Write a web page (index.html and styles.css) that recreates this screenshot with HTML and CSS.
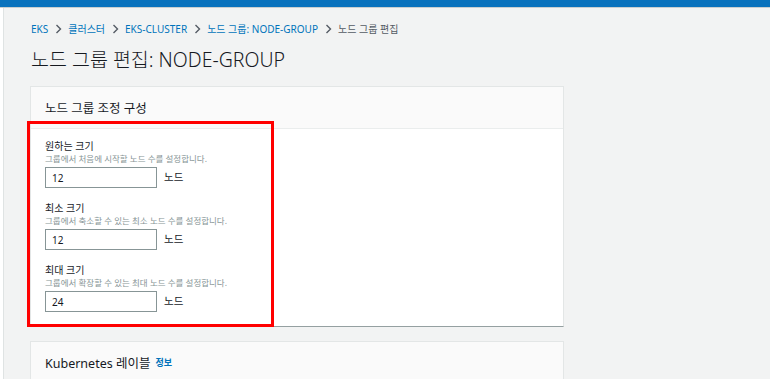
FILE: index.html
```html
<!DOCTYPE html>
<html lang="ko">
<head>
  <meta charset="UTF-8">
  <meta name="viewport" content="width=device-width, initial-scale=1.0">
  <title>노드 그룹 편집</title>
  <link rel="stylesheet" href="styles.css">
</head>
<body>
  <div class="top-bar"></div>
  <div class="page">
    <div class="breadcrumb">
      <a href="#">EKS</a>
      <svg class="sep" width="7" height="10" viewBox="0 0 7 10"><path d="M1.5 1 L5.5 5 L1.5 9" fill="none" stroke="#545b64" stroke-width="1.4"/></svg>
      <a href="#">클러스터</a>
      <svg class="sep" width="7" height="10" viewBox="0 0 7 10"><path d="M1.5 1 L5.5 5 L1.5 9" fill="none" stroke="#545b64" stroke-width="1.4"/></svg>
      <a href="#">EKS-CLUSTER</a>
      <svg class="sep" width="7" height="10" viewBox="0 0 7 10"><path d="M1.5 1 L5.5 5 L1.5 9" fill="none" stroke="#545b64" stroke-width="1.4"/></svg>
      <a href="#">노드 그룹: NODE-GROUP</a>
      <svg class="sep" width="7" height="10" viewBox="0 0 7 10"><path d="M1.5 1 L5.5 5 L1.5 9" fill="none" stroke="#545b64" stroke-width="1.4"/></svg>
      <span class="current">노드 그룹 편집</span>
    </div>
    <h1>노드 그룹 편집: NODE-GROUP</h1>

    <div class="card">
      <div class="card-header">노드 그룹 조정 구성</div>
      <div class="card-body">
        <div class="field">
          <label for="desired">원하는 크기</label>
          <div class="desc">그룹에서 처음에 시작할 노드 수를 설정합니다.</div>
          <div class="input-row">
            <input type="text" id="desired" value="12">
            <span class="unit">노드</span>
          </div>
        </div>
        <div class="field">
          <label for="min">최소 크기</label>
          <div class="desc">그룹에서 축소할 수 있는 최소 노드 수를 설정합니다.</div>
          <div class="input-row">
            <input type="text" id="min" value="12">
            <span class="unit">노드</span>
          </div>
        </div>
        <div class="field last">
          <label for="max">최대 크기</label>
          <div class="desc">그룹에서 확장할 수 있는 최대 노드 수를 설정합니다.</div>
          <div class="input-row">
            <input type="text" id="max" value="24">
            <span class="unit">노드</span>
          </div>
        </div>
        <div class="highlight"></div>
      </div>
    </div>

    <div class="card">
      <div class="card-header">Kubernetes 레이블 <a href="#" class="info">정보</a></div>
    </div>
  </div>
</body>
</html>
```

FILE: styles.css
```css
body {
  font-family: 'Noto Sans', 'Noto Sans CJK KR', sans-serif;
  background-color: #ffffff;
  margin: 0;
  padding: 0;
  color: #16191f;
  height: 379px;
  overflow: hidden;
}
.top-bar {
  height: 7px;
  background-color: #0972bd;
  border-bottom: 1px solid #c9cfd0;
}
.page {
  margin-left: 3px;
  border-left: 1px solid #dfe3e3;
  background-color: #f2f3f3;
  padding: 14px 0 0 26px;
  height: 400px;
}
.breadcrumb {
  font-size: 10px;
  line-height: 14px;
  display: flex;
  align-items: center;
  padding-left: 1px;
}
.breadcrumb a {
  color: #0073bb;
  text-decoration: none;
}
.breadcrumb .sep {
  margin: 0 6px 0 7px;
}
.breadcrumb .current {
  color: #545b64;
}
h1 {
  font-size: 19.5px;
  font-weight: 300;
  margin: 11px 0 13px 1px;
  line-height: 26px;
  color: #16191f;
}
.card {
  width: 532px;
  background-color: #ffffff;
  border: 1px solid #e3e6e6;
  border-bottom-color: #95a0a1;
  margin-bottom: 14px;
}
.card-header {
  background-color: #fafafa;
  border-bottom: 1px solid #eaeded;
  height: 41px;
  display: flex;
  align-items: center;
  padding-left: 14px;
  font-size: 12.5px;
  font-weight: 400;
  color: #16191f;
}
.card-header .info {
  color: #0073bb;
  font-size: 9px;
  font-weight: 700;
  text-decoration: none;
  margin-left: 5px;
}
.card-body {
  position: relative;
  padding: 10px 14px 14px;
}
.field {
  margin-bottom: 13px;
}
.field.last {
  margin-bottom: 0;
}
label {
  display: block;
  font-size: 10px;
  line-height: 14px;
  color: #16191f;
}
.desc {
  font-size: 8.5px;
  line-height: 12px;
  color: #879596;
  margin-bottom: 2px;
}
.input-row {
  display: flex;
  align-items: center;
}
input {
  width: 112px;
  height: 21px;
  box-sizing: border-box;
  border: 1px solid #879596;
  padding: 0 6px;
  font-family: inherit;
  font-size: 10px;
  color: #16191f;
}
.unit {
  font-size: 10.5px;
  margin-left: 7px;
  margin-top: -2px;
}
.highlight {
  position: absolute;
  left: -4px;
  top: -8px;
  width: 241px;
  height: 200px;
  border: 3px solid #ff0000;
}
```
